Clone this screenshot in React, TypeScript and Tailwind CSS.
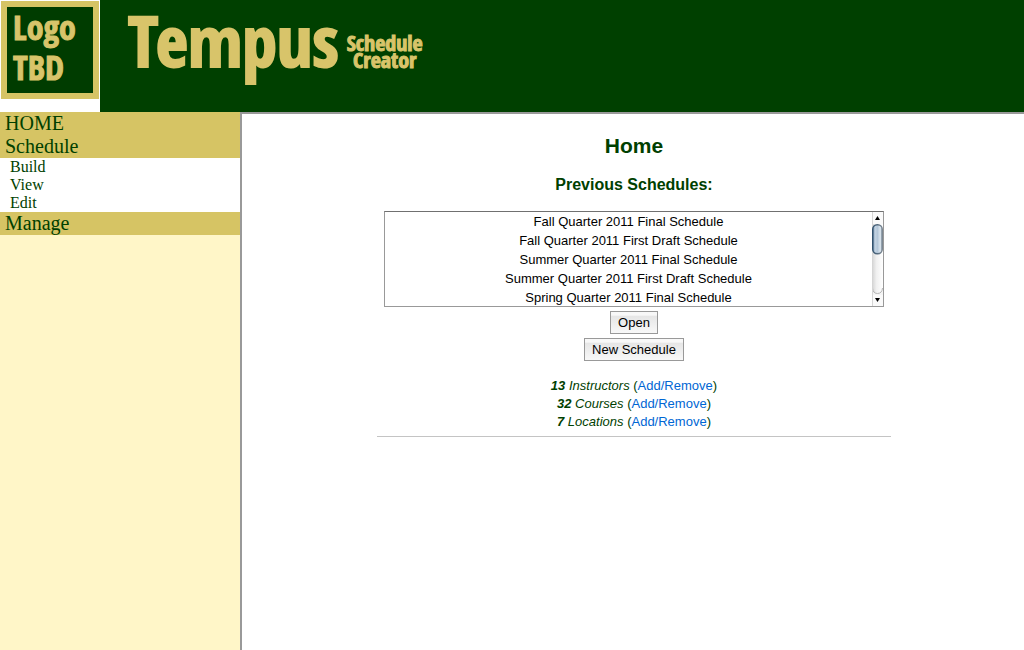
const schedules = [
  "Fall Quarter 2011 Final Schedule",
  "Fall Quarter 2011 First Draft Schedule",
  "Summer Quarter 2011 Final Schedule",
  "Summer Quarter 2011 First Draft Schedule",
  "Spring Quarter 2011 Final Schedule",
];

const totals = [
  { count: 13, label: "Instructors" },
  { count: 32, label: "Courses" },
  { count: 7, label: "Locations" },
];

const displayFont =
  "font-['Open_Sans_Condensed','Lato',sans-serif] font-black text-[#d8c46a]";

function Header() {
  return (
    <header className="flex h-28 bg-[#004000]">
      <div className="w-[100px] shrink-0 bg-white p-px">
        <div className={`${displayFont} h-[98px] border-[6px] border-[#d6c464] bg-[#003c00] pl-1.5 text-[34px] leading-10 [-webkit-text-stroke:1px_#d8c46a]`}>
          Logo
          <br />
          TBD
        </div>
      </div>
      <div className={`${displayFont} flex items-start pl-7`}>
        <span className="text-[70px] leading-[80px] [-webkit-text-stroke:2px_#d8c46a]">Tempus</span>
        <span className="pt-[34px] pl-2 text-center text-[22px] leading-[17px] [-webkit-text-stroke:1px_#d8c46a]">
          Schedule
          <br />
          Creator
        </span>
      </div>
    </header>
  );
}

function Sidebar() {
  return (
    <nav className="w-60 shrink-0 bg-[#fff6c8] font-['Liberation_Serif',serif] text-[#004000]">
      <div className="bg-[#d6c464] pl-[5px] text-[20px] leading-[23px]">
        <a href="#home" className="block">HOME</a>
        <a href="#schedule" className="block">Schedule</a>
      </div>
      <div className="bg-white pl-2.5 text-base leading-[18px]">
        <a href="#build" className="block">Build</a>
        <a href="#view" className="block">View</a>
        <a href="#edit" className="block">Edit</a>
      </div>
      <a href="#manage" className="block bg-[#d6c464] pl-[5px] text-[20px] leading-[23px]">Manage</a>
    </nav>
  );
}

function ScrollTrack() {
  return (
    <svg width="11" height="94" viewBox="0 0 11 94" aria-hidden="true" className="shrink-0">
      <defs>
        <linearGradient id="track">
          <stop offset="0" stopColor="#d2d2d2" />
          <stop offset=".4" stopColor="#f0f0f0" />
          <stop offset="1" stopColor="#fff" />
        </linearGradient>
        <linearGradient id="thumb">
          <stop offset="0" stopColor="#6f8dab" />
          <stop offset=".25" stopColor="#c3d3e2" />
          <stop offset=".5" stopColor="#b4c7d9" />
          <stop offset=".8" stopColor="#dce6ee" />
          <stop offset="1" stopColor="#93a5b6" />
        </linearGradient>
        <linearGradient id="edge">
          <stop offset="0" stopColor="#33536f" />
          <stop offset="1" stopColor="#7c8791" />
        </linearGradient>
      </defs>
      <rect width="11" height="94" fill="#fafafa" />
      <rect x="0" y="12" width="11" height="70" fill="url(#track)" />
      <path d="M0 76Q1 82 5.500 82T11 76V83H0Z" fill="#f4f4f4" />
      <path d="M0.500 76Q1 81.500 5.500 81.500T10.500 76" fill="none" stroke="#b5b5b5" />
      <path d="M.5 0V94" stroke="#d5d5d5" />
      <rect x=".75" y="12.750" width="9.500" height="29" rx="4.500" fill="url(#thumb)" stroke="url(#edge)" strokeWidth="1.500" />
      <path d="M5.500 4L8 8H3Z" />
      <path d="M5.500 90L8 86H3Z" />
    </svg>
  );
}

const buttonStyle =
  "h-[23px] border border-[#999] bg-linear-to-b from-[#f8f8f8] from-15% via-[#e6e6e6] via-20% to-[#f8f8f8] px-[7px] text-[13px] leading-[21px] text-black";

function Home() {
  return (
    <main className="flex flex-1 flex-col items-center border-t-2 border-l-2 border-[#999] bg-white pl-0.5 font-['Liberation_Sans',Arial,sans-serif] text-[13px] text-[#004000]">
      <h1 className="mt-5 text-[21px] leading-6 font-bold">Home</h1>
      <h2 className="mt-[17px] text-base leading-5 font-bold">
        <label htmlFor="schedules">Previous Schedules:</label>
      </h2>
      <div className="mt-4 flex w-[500px] border border-[#999] border-t-[#707070]">
        <select
          id="schedules"
          size={5}
          className="h-[94px] min-w-0 flex-1 overflow-hidden border-0 bg-white p-0 pt-0.5 text-center text-black outline-none [scrollbar-width:none]"
        >
          {schedules.map((name) => (
            <option key={name} className="h-[19px] p-0 text-center leading-5">
              {name}
            </option>
          ))}
        </select>
        <ScrollTrack />
      </div>
      <button type="button" className={`mt-1 ${buttonStyle}`}>Open</button>
      <button type="button" className={`mt-1 ${buttonStyle}`}>New Schedule</button>
      <ul className="mt-4 w-[66%] border-b border-[#c4c4c4] pb-[5px] text-center leading-[18px]">
        {totals.map(({ count, label }) => (
          <li key={label}>
            <em>
              <b>{count}</b> {label}
            </em>{" "}
            (<a href={`#${label.toLowerCase()}`} className="text-[#0066d4]">Add/Remove</a>)
          </li>
        ))}
      </ul>
    </main>
  );
}

export default function App() {
  return (
    <div className="flex min-h-screen flex-col">
      <Header />
      <div className="flex flex-1">
        <Sidebar />
        <Home />
      </div>
    </div>
  );
}
